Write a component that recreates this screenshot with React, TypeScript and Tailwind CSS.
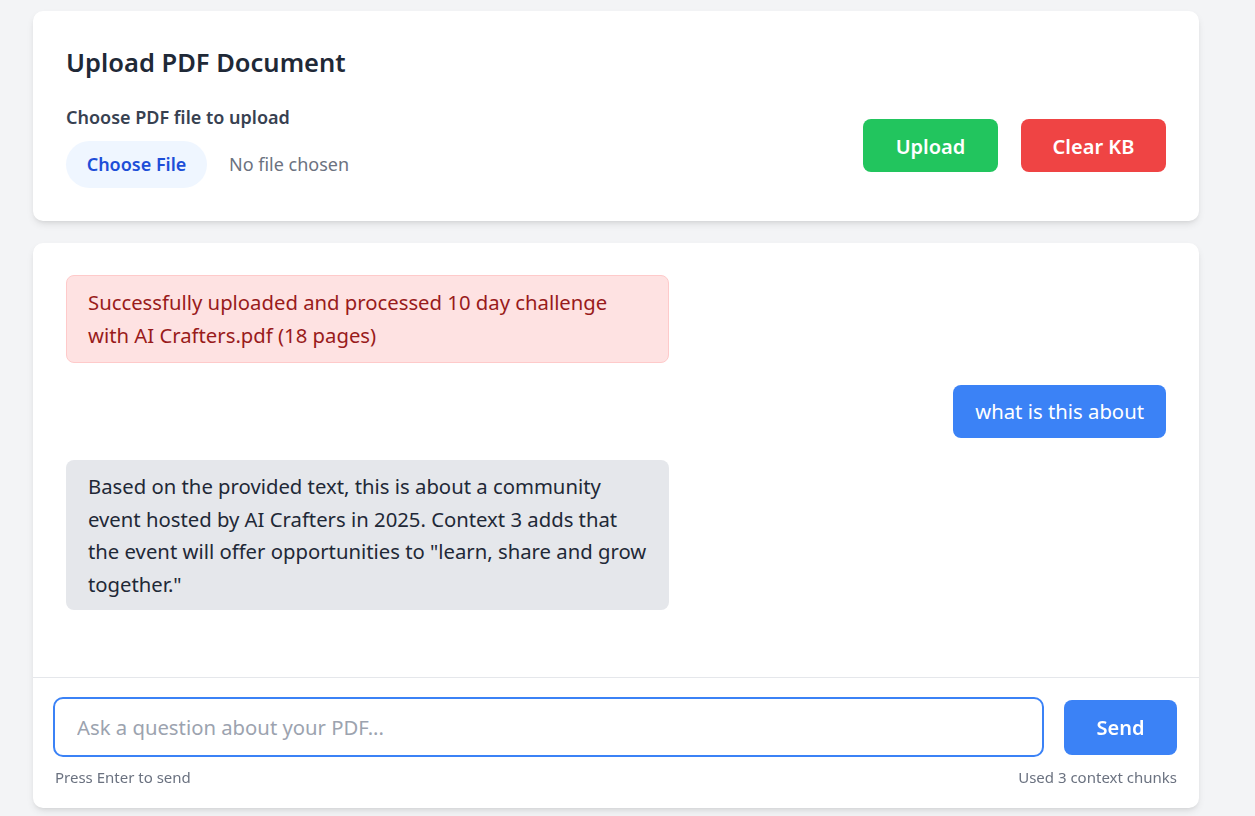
export default function App() {
  return (
    <div className="min-h-screen bg-[#f3f4f6] pt-[11px] pl-[33px] font-['Noto_Sans','Open_Sans',sans-serif]">
      <div className="w-[1166px]">
        <div className="rounded-[10px] bg-white px-[33px] pt-[34px] pb-[33px] shadow-[0_4px_8px_-2px_rgba(0,0,0,0.12),0_2px_4px_-2px_rgba(0,0,0,0.08)]">
          <h2 className="text-[25.5px] leading-[34px] font-semibold text-[#1f2937]">Upload PDF Document</h2>
          <div className="mt-[23px] flex items-center justify-between">
            <div>
              <div className="text-[18px] leading-[30px] font-semibold text-[#374151]">Choose PDF file to upload</div>
              <div className="mt-[9px] flex items-center">
                <span className="flex h-[47px] w-[141px] items-center justify-center rounded-full bg-[#eff6ff] text-[18px] font-semibold text-[#1d4ed8]">
                  Choose File
                </span>
                <span className="ml-[22px] text-[18px] text-[#6b7280]">No file chosen</span>
              </div>
            </div>
            <div className="flex gap-[23px]">
              <button className="h-[53px] w-[135px] rounded-[8px] bg-[#22c55e] pt-[3px] text-[20px] font-semibold text-white">Upload</button>
              <button className="h-[53px] w-[145px] rounded-[8px] bg-[#ef4444] pt-[3px] text-[20px] font-semibold text-white">Clear KB</button>
            </div>
          </div>
        </div>

        <div className="mt-[22px] rounded-[10px] bg-white shadow-[0_4px_8px_-2px_rgba(0,0,0,0.12),0_2px_4px_-2px_rgba(0,0,0,0.08)]">
          <div className="flex h-[434px] flex-col gap-[22px] px-[33px] pt-[32px]">
            <div className="w-[603px] rounded-[8px] border border-[#fecaca] bg-[#fee2e2] px-[21px] py-[10px] text-[20.3px] leading-[33px] text-[#991b1b]">
              Successfully uploaded and processed 10 day challenge with AI Crafters.pdf (18 pages)
            </div>
            <div className="flex justify-end">
              <div className="rounded-[8px] bg-[#3b82f6] px-[22px] py-[10px] text-[20.3px] leading-[33px] text-white">what is this about</div>
            </div>
            <div className="w-[603px] rounded-[8px] bg-[#e5e7eb] px-[22px] py-[10px] text-[20.3px] leading-[32.5px] text-[#1f2937]">
              Based on the provided text, this is about a community event hosted by AI Crafters in 2025. Context 3 adds that the event will offer opportunities to "learn, share and grow together."
            </div>
          </div>
          <div className="border-t border-[#e5e7eb] pl-[20px] pr-[22px] pt-[19px] pb-[21px]">
            <div className="flex items-center gap-[20px]">
              <input
                autoFocus
                placeholder="Ask a question about your PDF..."
                className="h-[60px] flex-1 rounded-[10px] border-2 border-[#3b82f6] px-[22px] text-[20.3px] text-[#1f2937] placeholder:text-[#9ca3af] outline-none"
              />
              <button className="h-[55px] w-[113px] rounded-[8px] bg-[#3b82f6] pt-[2px] text-[20px] font-semibold text-white">Send</button>
            </div>
            <div className="mt-[10px] flex justify-between pl-[2px] text-[15px] leading-[20px] text-[#6b7280]">
              <span>Press Enter to send</span>
              <span>Used 3 context chunks</span>
            </div>
          </div>
        </div>
      </div>
    </div>
  );
}
